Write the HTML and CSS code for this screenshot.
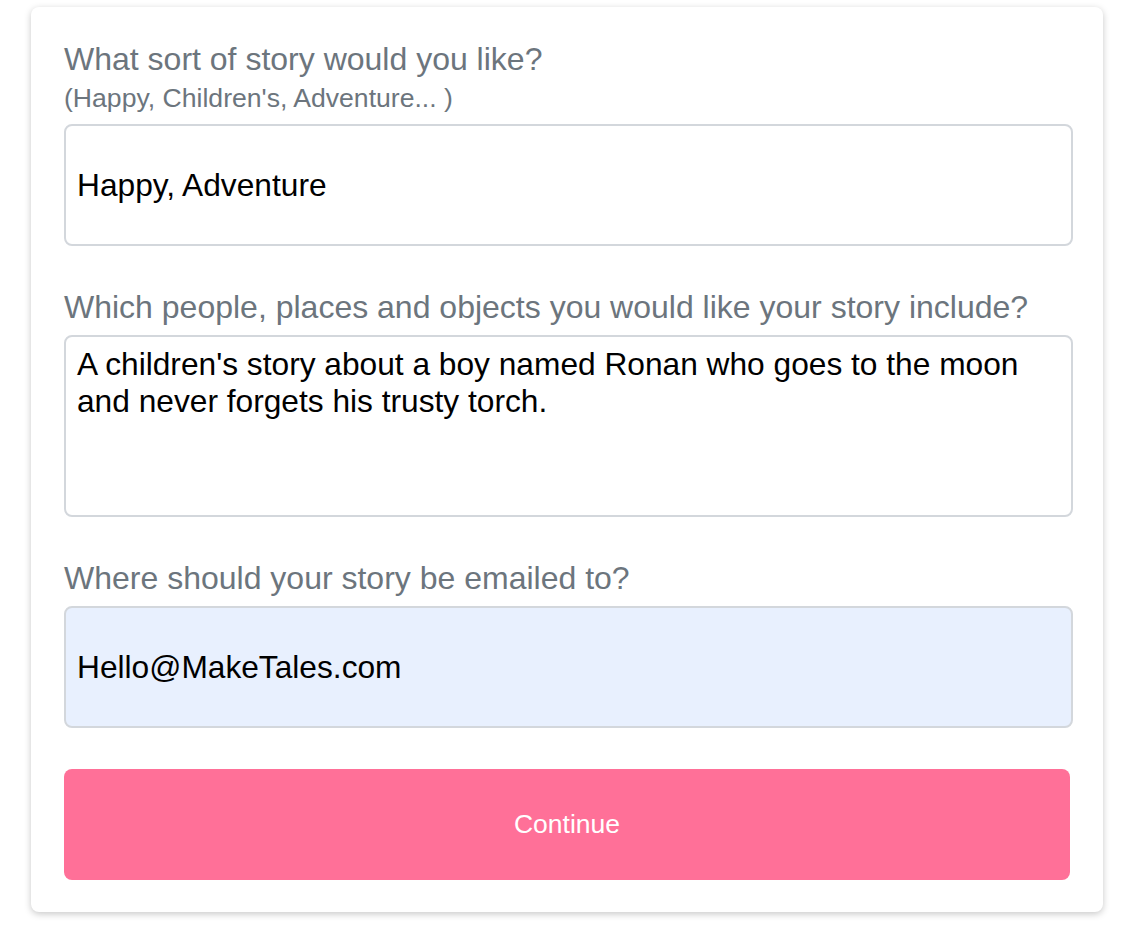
FILE: index.html
```html
<html>
  <head>
    <link rel="stylesheet" href="styles.css">
  </head>
  <body>
    <div class="page">
      <form class="story-form">
        <div class="field">
          <label for="genre">What sort of story would you like?</label>
          <span class="hint">(Happy, Children's, Adventure... )</span>
          <input id="genre" name="genre" type="text" value="Happy, Adventure">
        </div>
        <div class="field">
          <label for="details">Which people, places and objects you would like your story include?</label>
          <textarea id="details" name="details">A children's story about a boy named Ronan who goes to the moon and never forgets his trusty torch.</textarea>
        </div>
        <div class="field">
          <label for="email">Where should your story be emailed to?</label>
          <input id="email" name="email" type="email" class="autofilled" value="Hello@MakeTales.com">
        </div>
        <button type="button" class="continue">Continue</button>
      </form>
    </div>
  </body>
</html>
```

FILE: styles.css
```css
body {
  margin: 0;
  font-family: "Liberation Sans", Arial, sans-serif;
  background-color: white;
}

.page {
  padding: 7px 25px 14px 31px;
}

.story-form {
  display: flex;
  flex-direction: column;
  padding: 33px 30px 32px 33px;
  background-color: white;
  border-radius: 8px;
  box-shadow: 0 2px 7px rgba(0, 0, 0, 0.22);
}

.field {
  display: flex;
  flex-direction: column;
  margin-bottom: 42px;
}

.field label {
  color: #6c757d;
  font-size: 32px;
  line-height: 38px;
  margin-bottom: 9px;
}

.field .hint {
  color: #6c757d;
  font-size: 26.6px;
  line-height: 32px;
  margin-top: -5px;
  margin-bottom: 10px;
}

.field input,
.field textarea {
  box-sizing: border-box;
  width: 100%;
  font-family: inherit;
  font-size: 31.7px;
  color: black;
  border: solid 2px #d3d7dc;
  border-radius: 8px;
  background-color: white;
  outline: none;
}

.field input {
  height: 122px;
  padding: 0 11px;
}

.field textarea {
  height: 182px;
  padding: 9px 11px;
  line-height: 37px;
  resize: none;
}

.field input.autofilled {
  background-color: #e8f0fe;
}

.field:nth-of-type(3) {
  margin-bottom: 41px;
}

.continue {
  height: 111px;
  width: calc(100% - 3px);
  border: none;
  border-radius: 8px;
  background-color: #ff7098;
  color: white;
  font-family: inherit;
  font-size: 26.5px;
}
```
